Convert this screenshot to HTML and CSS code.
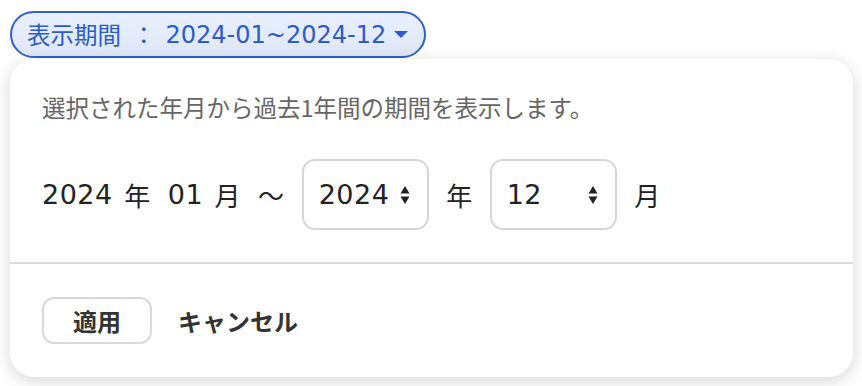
FILE: index.html
```html
<!DOCTYPE html>
<html lang="ja">
<head>
<meta charset="utf-8">
<link rel="stylesheet" href="styles.css">
</head>
<body>
<div class="page">
  <button class="pill">
    <span class="pill-label">表示期間</span>
    <span class="pill-colon">：</span>
    <span class="pill-value">2024-01~2024-12</span>
    <svg class="pill-caret" width="14" height="7" viewBox="0 0 14 7"><path d="M0 0H14L7 7Z" fill="#2c5cc9"/></svg>
  </button>
  <div class="card">
    <div class="body">
      <p class="desc">選択された年月から過去1年間の期間を表示します。</p>
      <div class="row">
        <span class="num tight">2024</span>
        <span>年</span>
        <span class="num tight">01</span>
        <span>月</span>
        <span>〜</span>
        <div class="select">
          <span class="num">2024</span>
          <svg class="updown" width="10" height="20" viewBox="0 0 10 20"><path d="M5 1L9.5 8.5H0.5Z M0.5 11.5H9.5L5 19Z" fill="#222"/></svg>
        </div>
        <span>年</span>
        <div class="select">
          <span class="num">12</span>
          <svg class="updown" width="10" height="20" viewBox="0 0 10 20"><path d="M5 1L9.5 8.5H0.5Z M0.5 11.5H9.5L5 19Z" fill="#222"/></svg>
        </div>
        <span>月</span>
      </div>
    </div>
    <div class="footer">
      <button class="btn-apply">適用</button>
      <button class="btn-cancel">キャンセル</button>
    </div>
  </div>
</div>
</body>
</html>
```

FILE: styles.css
```css
html, body {
  margin: 0;
  padding: 0;
  background: #ffffff;
}
body {
  font-family: "Noto Sans CJK JP", "Noto Sans", sans-serif;
  width: 862px;
  height: 386px;
  overflow: hidden;
}
.page {
  padding: 11px 9px 0 10px;
  display: flex;
  flex-direction: column;
  align-items: flex-start;
}
.pill {
  height: 47px;
  box-sizing: border-box;
  border: 2px solid #2f5fcc;
  border-radius: 24px;
  background: linear-gradient(#e8effd, #dfe7f8);
  color: #2c5cc9;
  font-family: inherit;
  font-size: 23.5px;
  display: flex;
  align-items: center;
  white-space: nowrap;
  padding: 0 16px 0 15px;
  line-height: 1;
}
.pill-colon {
  margin: 0 10px 0 11px;
}
.pill-value {
  font-family: "DejaVu Sans", "Noto Sans CJK JP", sans-serif;
  font-size: 24px;
}
.pill-caret {
  margin-left: 8px;
}
.card {
  margin-top: 1px;
  width: 843px;
  height: 318px;
  box-sizing: border-box;
  background: #fff;
  border-radius: 24px;
  box-shadow: 0 4px 18px rgba(0, 0, 0, 0.16);
  display: flex;
  flex-direction: column;
}
.body {
  padding: 33px 32px 0 32px;
  height: 205px;
  box-sizing: border-box;
  border-bottom: 2px solid #dcdcdc;
}
.desc {
  margin: 0;
  font-size: 23.5px;
  line-height: 30px;
  color: #666;
}
.row {
  margin-top: 37px;
  display: flex;
  align-items: center;
  gap: 17.5px;
  font-size: 26px;
  color: #222;
}
.num {
  font-family: "DejaVu Sans", "Noto Sans CJK JP", sans-serif;
  font-size: 27px;
  letter-spacing: 0.5px;
}
.row .tight {
  margin-right: -6px;
}
.select {
  width: 127px;
  height: 71px;
  box-sizing: border-box;
  border: 2px solid #d6d6d6;
  border-radius: 13px;
  display: flex;
  align-items: center;
  justify-content: space-between;
  padding: 0 17px 0 15px;
}
.footer {
  display: flex;
  align-items: center;
  gap: 26px;
  padding: 33px 32px 0 32px;
}
.btn-apply {
  width: 110px;
  height: 47px;
  box-sizing: border-box;
  border: 2px solid #dadada;
  border-radius: 12px;
  background: #fff;
  font-family: inherit;
  font-size: 24px;
  font-weight: 700;
  color: #333;
}
.btn-cancel {
  border: none;
  background: none;
  padding: 0;
  font-family: inherit;
  font-size: 24px;
  font-weight: 700;
  color: #333;
}
```
